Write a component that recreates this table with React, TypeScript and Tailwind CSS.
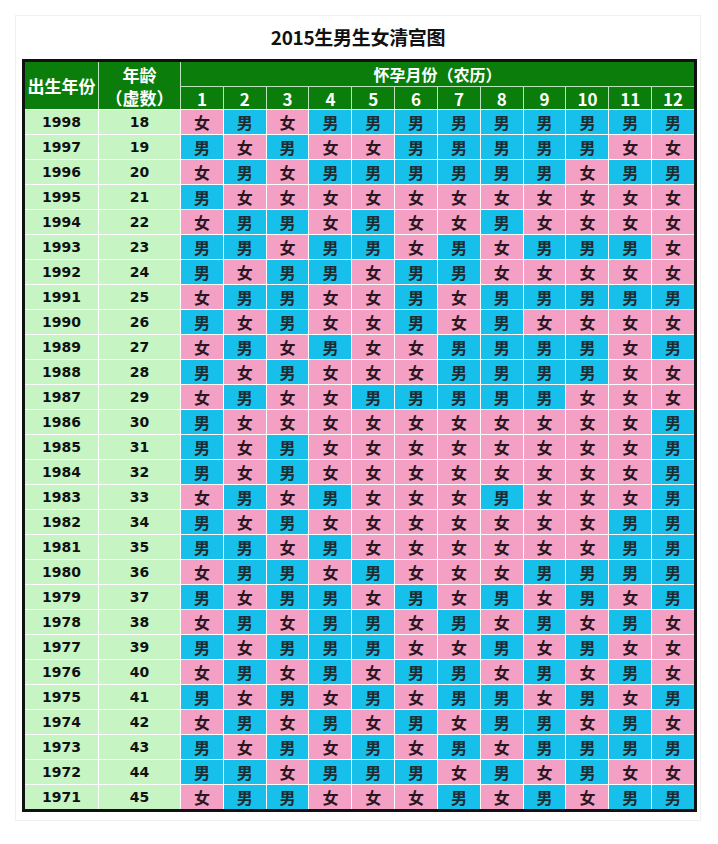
import React from 'react';

const rows: [number, number, string][] = [
  [1998, 18, '女男女男男男男男男男男男'],
  [1997, 19, '男女男女女男男男男男女女'],
  [1996, 20, '女男女男男男男男男女男男'],
  [1995, 21, '男女女女女女女女女女女女'],
  [1994, 22, '女男男女男女女男女女女女'],
  [1993, 23, '男男女男男女男女男男男女'],
  [1992, 24, '男女男男女男男女女女女女'],
  [1991, 25, '女男男女女男女男男男男男'],
  [1990, 26, '男女男女女男女男女女女女'],
  [1989, 27, '女男女男女女男男男男女男'],
  [1988, 28, '男女男女女女男男男男女女'],
  [1987, 29, '女男女女男男男男男女女女'],
  [1986, 30, '男女女女女女女女女女女男'],
  [1985, 31, '男女男女女女女女女女女男'],
  [1984, 32, '男女男女女女女女女女女男'],
  [1983, 33, '女男女男女女女男女女女男'],
  [1982, 34, '男女男女女女女女女女男男'],
  [1981, 35, '男男女男女女女女女女男男'],
  [1980, 36, '女男男女男女女女男男男男'],
  [1979, 37, '男女男男女男女男女男女男'],
  [1978, 38, '女男女男男女男女男女男女'],
  [1977, 39, '男女男男男女女男女男女女'],
  [1976, 40, '女男女男女男男女男女男女'],
  [1975, 41, '男女男女男女男男女男女男'],
  [1974, 42, '女男女男女男女男男女男女'],
  [1973, 43, '男女男女男女男女男男男男'],
  [1972, 44, '男男女男男男女男女男女女'],
  [1971, 45, '女男男女女女男女男女男男'],
];

const months = [1, 2, 3, 4, 5, 6, 7, 8, 9, 10, 11, 12];

const cols = 'grid grid-cols-[73px_81px_repeat(12,minmax(0,1fr))] gap-px';

export default function App() {
  return (
    <div className="w-[718px] h-[844px] bg-white pt-[15px] pl-[15px] font-['Noto_Sans_CJK_SC',sans-serif]">
      <div className="w-[686px] border border-[#efefef] bg-white pb-[8px]">
        {/* 标题 */}
        <div className="h-[43px] flex items-center justify-center text-[19px] font-bold text-[#111] tracking-[-0.3px]">
          2015生男生女清宫图
        </div>

        <div className="ml-[6px] w-[675px] border-[3px] border-[#111] bg-white">
          {/* 表头 */}
          <div className={`${cols} bg-[#b9e3b9] text-white font-bold`}>
            <div className="row-span-2 bg-[#0b7d0b] flex items-center justify-center text-[17px]">
              出生年份
            </div>
            <div className="row-span-2 bg-[#0b7d0b] flex flex-col items-center justify-center text-[17px] leading-[23px]">
              <span>年龄</span>
              <span>（虚数）</span>
            </div>
            <div className="col-span-12 h-[24px] bg-[#0b7d0b] flex items-center justify-center text-[16px]">
              怀孕月份（农历）
            </div>
            {months.map((m) => (
              <div key={m} className="h-[22px] bg-[#0b7d0b] flex items-center justify-center text-[17px] leading-none">
                {m}
              </div>
            ))}
          </div>

          {/* 表体 */}
          <div className={`${cols} mt-px bg-white`}>
            {rows.map(([year, age, cells]) => (
              <React.Fragment key={year}>
                <div className="h-[24px] bg-[#c6f5c3] flex items-center justify-center text-[14px] font-bold text-[#111] font-['DejaVu_Sans',sans-serif]">
                  {year}
                </div>
                <div className="h-[24px] bg-[#c6f5c3] flex items-center justify-center text-[14px] font-bold text-[#111] font-['DejaVu_Sans',sans-serif]">
                  {age}
                </div>
                {cells.split('').map((c, i) => (
                  <div
                    key={i}
                    className={
                      c === '男'
                        ? 'h-[24px] bg-[#17c0ea] flex items-center justify-center text-[16px] font-bold text-[#1d2b30]'
                        : 'h-[24px] bg-[#f49fc4] flex items-center justify-center text-[16px] font-bold text-[#2a1620]'
                    }
                  >
                    {c}
                  </div>
                ))}
              </React.Fragment>
            ))}
          </div>
        </div>
      </div>
    </div>
  );
}
